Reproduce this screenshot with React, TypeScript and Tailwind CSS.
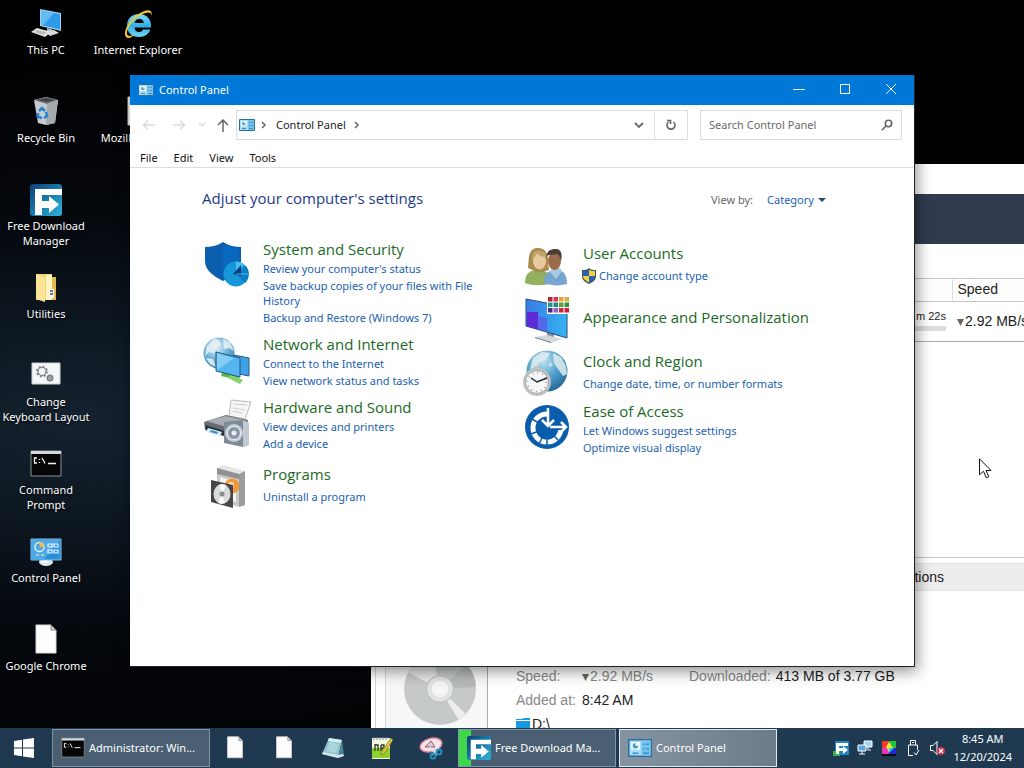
import type { ReactNode } from "react";

type IconProps = { size?: string };

/* ---------- desktop icons ---------- */

function PcIcon() {
  return (
    <svg viewBox="0 0 32 32" className="size-8">
      <path d="M10 1 31 5v18L10 18z" fill="#9fd0ef" />
      <path d="M11 2.500 30 6v15.500L11 17z" fill="#2f9be8" />
      <path d="M11 2.500 24 5 13 17.500l-2-.5z" fill="#63bdf5" />
      <path d="m17 20 5 1v3l-5-1z" fill="#aab4bb" />
      <path d="m14 23 10-1 5 3-9 3z" fill="#d3d8dc" />
      <path d="m1 24 6-4 14 4-6 5z" fill="#e4e4e4" />
      <path d="m4 24 4-2 9 2.500-4 2.500z" fill="#bdbdbd" />
    </svg>
  );
}

function IeIcon() {
  return (
    <svg viewBox="0 0 32 32" className="size-8">
      <defs>
        <linearGradient id="ie" x1="0" y1="0" x2="0" y2="1">
          <stop offset="0" stopColor="#7fdcf9" />
          <stop offset=".5" stopColor="#2fb0ea" />
          <stop offset="1" stopColor="#6fd3f5" />
        </linearGradient>
      </defs>
      <path
        d="M29 19.500H12.500c.3 3 2 4.500 4.500 4.500 2 0 3.200-.8 4-2.500h7.300C27 26 23 29 17 29 9.500 29 5 24.500 5 17.800 5 11 9.700 6 17 6c7.800 0 12 5 12 12zM12.600 15h9.200c-.3-2.600-2-4-4.500-4s-4.200 1.400-4.700 4z"
        fill="url(#ie)"
      />
      <path
        d="M6 30C-1 28 5 14 15 7 24 1 31 0 29.500 8 29.500 3 24 4 17 8 8 14 2.500 25 6 27.500c2 1 5 0 7-1.500-3 3-5 4.500-7 4z"
        fill="#f7c62e"
      />
    </svg>
  );
}

function BinIcon() {
  return (
    <svg viewBox="0 0 32 32" className="size-8">
      <path d="m4 4 12-3 12 3-3 23-9 2-8-2z" fill="#c9cccf" />
      <path d="m4 4 12-3 12 3-11 4z" fill="#6d7276" />
      <path d="m7 4 9-2 9 2-8 2z" fill="#3f4447" />
      <path d="m17 8 11-4-3 23-9 2z" fill="#a6aaae" />
      <path
        d="m9 15 3-3 3 3m1 1 1 4-3 2m-2 0-4-1 0-4"
        fill="none"
        stroke="#1f85d8"
        strokeWidth="2.500"
      />
    </svg>
  );
}

function FdmIcon({ size = "size-8" }: IconProps) {
  return (
    <svg viewBox="0 0 32 32" className={size}>
      <defs>
        <linearGradient id="fdm" x1="0" y1="0" x2="1" y2="1">
          <stop offset="0" stopColor="#0b3f74" />
          <stop offset="1" stopColor="#2cb5dc" />
        </linearGradient>
      </defs>
      <rect width="32" height="32" rx="3" fill="url(#fdm)" />
      <path d="M5 5h27v6H12v6h7v-5l10 8.500L19 29v-5h-7v7H5z" fill="#fff" />
    </svg>
  );
}

function FolderIcon() {
  return (
    <svg viewBox="0 0 32 32" className="size-8">
      <path d="M6 2h16v26H6z" fill="#f3d676" />
      <path d="M21 5h5v23h-5z" fill="#e2b94a" />
      <path d="M16 3h6v25h-6z" fill="#fff3c2" />
      <path d="m6 2 9 4v24l-9-3z" fill="#fbe39a" />
      <path d="M19 17h5v9h-5z" fill="#f6f6f6" />
      <path d="M20 18h3v2h-3zm0 3h3v2h-3z" fill="#777" />
    </svg>
  );
}

function GearsIcon() {
  return (
    <svg viewBox="0 0 32 32" className="size-8">
      <path d="M2 3h28v21H2z" fill="#f4f7f7" stroke="#ccd2d4" />
      <circle cx="12" cy="11.500" r="4" fill="none" stroke="#7b8285" strokeWidth="1.200" />
      <circle
        cx="12"
        cy="11.500"
        r="5"
        fill="none"
        stroke="#7b8285"
        strokeWidth="1.800"
        strokeDasharray="2 1.927"
      />
      <circle cx="20" cy="18" r="2.500" fill="none" stroke="#7b8285" strokeWidth="2" />
      <circle cx="20" cy="18" r="1" fill="#7b8285" />
    </svg>
  );
}

function TerminalIcon({ size = "size-8" }: IconProps) {
  return (
    <svg viewBox="0 0 32 32" className={size}>
      <path d="M1 3h30v25H1z" fill="#060606" stroke="#8d9296" />
      <path d="M1 3h30v3H1z" fill="#d5dade" />
      <path
        d="M7 10H4.500v5H7M9.500 11v1m0 2v1M12 10l3 5.500M18 15.500h8"
        fill="none"
        stroke="#f2f2f2"
        strokeWidth="1.300"
      />
    </svg>
  );
}

function PanelIcon({ size = "size-8", stand = false }: IconProps & { stand?: boolean }) {
  return (
    <svg viewBox="0 0 32 32" className={size}>
      {stand && (
        <g>
          <ellipse cx="16" cy="26" rx="7" ry="4" fill="#dfe6ea" />
          <ellipse cx="15" cy="25" rx="4" ry="2" fill="#fff" />
        </g>
      )}
      <path d="M1 3h30v21H1z" fill="#2b8fd6" stroke="#7cc4ee" />
      <path d="M2 4h28L14 23H2z" fill="#4fa9e2" />
      <circle cx="9.500" cy="11" r="4.500" fill="none" stroke="#d7effc" strokeWidth="1.500" />
      <path d="M9.500 11V6a5 5 0 0 1 4.500 5z" fill="#f3b63f" />
      <path
        d="M18 8h4v3h-4zm6 0h4v3h-4zm-6 6h4v3h-4zm6 0h4v3h-4zM6 19h3m2 0h3"
        fill="none"
        stroke="#e9f7ff"
        strokeWidth="1.200"
      />
    </svg>
  );
}

// Small version used in the title bar, address bar and taskbar
function PanelSmallIcon({ size = "size-4" }: IconProps) {
  return (
    <svg viewBox="0 0 16 16" className={size}>
      <path d="M.500 2.500h15v11H.500z" fill="#a9dcf6" stroke="#2c6f9e" />
      <path d="M9 3h6v10H9z" fill="#74c4ef" />
      <path d="M2 4h6v5H2z" fill="#e9f7fd" />
      <circle cx="5" cy="6.500" r="1.800" fill="#4599c9" />
      <path d="M5 6.500V4.500a2 2 0 0 1 2 2z" fill="#fff" />
      <path d="M10 5.500h1m1 0h2m-4 3h1m1 0h2m-11 3h4m3 0h4" stroke="#3c8fc0" />
    </svg>
  );
}

function PageIcon({ size = "size-8" }: IconProps) {
  return (
    <svg viewBox="0 0 32 32" className={size}>
      <path d="M6 1h15l5 5v23H6z" fill="#fdfdfd" stroke="#d7d7d7" />
      <path d="M21 1v5h5z" fill="#dcdcdc" stroke="#666" strokeWidth=".8" />
    </svg>
  );
}

/* ---------- category icons ---------- */

function SecurityIcon() {
  return (
    <svg viewBox="0 0 48 48" className="size-12">
      <path d="M20 1c6 4 12 5 18 5v14c0 9-8 15-18 20C10 35 2 29 2 20V6c6 0 12-1 18-5z" fill="#0a5fae" />
      <path d="M20 3c5 3 11 4 16 4v13c0 8-7 13-16 18z" fill="#0868bd" />
      <circle cx="33" cy="33" r="12.500" fill="#1597d8" />
      <path d="M33 33 43 25a12.500 12.500 0 0 1-1 17z" fill="#0d7fc6" />
      <path d="M33 33V20.500a12.500 12.500 0 0 1 8 3z" fill="#4ac0ee" />
      <path d="m30 33 8-9v11z" fill="#073f86" />
      <path d="M33 33h12.500" stroke="#45b8e9" />
    </svg>
  );
}

function NetworkIcon() {
  return (
    <svg viewBox="0 0 48 48" className="size-12">
      <defs>
        <radialGradient id="globe" cx=".4" cy=".3" r=".8">
          <stop offset="0" stopColor="#e9f5fb" />
          <stop offset=".5" stopColor="#6fb1d6" />
          <stop offset="1" stopColor="#2f7fb0" />
        </radialGradient>
      </defs>
      <circle cx="16" cy="17" r="15.500" fill="url(#globe)" />
      <path d="m4 10 7-7 5 1 2 5-5 3-2 5-5-1-4 4zM20 3l7 3 4 9-5-3-5 1zM3 22l7 1 3 8-6-3z" fill="#e8f1f3" opacity=".85" />
      <path d="m20 35 16 4v5l-18-4z" fill="#54b848" />
      <path d="m28 38 12 6-3 4-12-6z" fill="#83d36d" />
      <path d="m31 19 15 3v18l-15-3z" fill="#3ba2e8" stroke="#2c5f86" />
      <path d="m13 16 24 6v19l-24-6z" fill="#55b5f0" stroke="#20567c" />
      <path d="m14 17 17 5-17 12z" fill="#83cdf7" />
    </svg>
  );
}

function HardwareIcon() {
  return (
    <svg viewBox="0 0 48 48" className="size-12">
      <path d="M28 1 48 3l-6 17-16-3z" fill="#f5f5f5" stroke="#bcbcbc" />
      <path d="m31 5 13 1m-14 3 12 2m-13 1 11 2" stroke="#cfcfcf" />
      <path d="m1 23 22-7 22 5-3 12-19 5L2 31z" fill="#686d73" />
      <path d="m3 22 20-5 19 4-18 7z" fill="#a9aeb3" />
      <path d="m2 26 20 6v5L3 31z" fill="#29333b" />
      <path d="m5 29 14 4-2 4-14-4z" fill="#d8edf7" />
      <path d="m8 31 7 2-1 2-7-2z" fill="#3791c4" />
      <path d="m21 23 19-2 6 3v22l-6 2-19-4z" fill="#7e8b99" />
      <path d="m40 21 6 3v22l-6 2z" fill="#c2cad1" />
      <circle cx="31" cy="34" r="9" fill="#c8ced4" />
      <circle cx="31" cy="34" r="6.500" fill="#8996a5" stroke="#eef1f4" />
      <circle cx="31" cy="34" r="2.500" fill="#e9edf0" />
    </svg>
  );
}

function ProgramsIcon() {
  return (
    <svg viewBox="0 0 48 48" className="size-12">
      <path d="m14 6 6-3 22 6-6 3z" fill="#e6e6e6" />
      <path d="m14 6 22 6v33l-22-6z" fill="#c9c9c9" />
      <path d="m36 12 6-3v34l-6 2z" fill="#9c9c9c" />
      <path d="m14 6 22 6v5l-22-5z" fill="#919191" />
      <path d="m17 15 16 4v21l-16-3z" fill="#f2f2f2" />
      <circle cx="29" cy="24" r="7.500" fill="#f2973a" />
      <circle cx="28" cy="23" r="3" fill="#fde0b0" />
      <path d="m8 18 22 5v23L8 40z" fill="#474747" />
      <ellipse cx="19" cy="32" rx="8.500" ry="10" fill="#d9dcdd" />
      <path d="m19 32-3-9a9 9 0 0 1 7 0zm0 0 3 9a9 9 0 0 1-7 0z" fill="#f8fafa" />
      <circle cx="19" cy="32" r="2.500" fill="#8a8f91" />
    </svg>
  );
}

function UsersIcon() {
  return (
    <svg viewBox="0 0 48 48" className="size-12">
      <path d="M2 42c0-9 4-13 13-13s14 5 14 13c-8 3-19 3-27 0z" fill="#93b05f" />
      <path d="M5 27C6 17 5 8 14 7c9-1 11 7 11 13 0 4 1 6 1 9l-10 3z" fill="#a98d4f" />
      <ellipse cx="16.500" cy="20" rx="6.500" ry="8.500" fill="#e8c9a0" />
      <path d="M9 18c0-7 4-9 9-8 4 1 5 4 5 6-5 0-8-2-9-4-1 3-3 5-5 6z" fill="#c0a566" />
      <path d="M21 42c0-10 5-13 12-13s11 4 11 14c-7 2-15 2-23-1z" fill="#78a5cf" />
      <path d="m27 31 6 7 6-8-2-3h-8z" fill="#a8c8e4" />
      <ellipse cx="31.500" cy="20" rx="6.500" ry="9" fill="#9c6b49" />
      <path d="M24 19c-2-8 3-11 8-11s8 3 6 12c-1-4-2-6-4-7-4 1-8 0-10 2z" fill="#4a3c34" />
    </svg>
  );
}

const swatches = [
  ["#b5262d", "#d4315b", "#e7a13c", "#d9b23a"],
  ["#21998a", "#1a8c74", "#5aa33c", "#2f9148"],
  ["#4c2382", "#8b61cf", "#c5283b", "#d0202e"],
];

function AppearanceIcon() {
  return (
    <svg viewBox="0 0 48 48" className="size-12">
      <defs>
        <linearGradient id="screen" x1="0" y1="0" x2="1" y2="0">
          <stop offset="0" stopColor="#3a7be4" />
          <stop offset="1" stopColor="#35b3f2" />
        </linearGradient>
      </defs>
      <path d="m24 36 7 2v5l-7-2z" fill="#8b9096" />
      <path d="m12 42 12-2 15 4-11 4z" fill="#d5d8db" />
      <path d="m12 42 16 5v1l-16-5z" fill="#777c80" />
      <path d="m3 4 41 8v31L3 31z" fill="url(#screen)" stroke="#274b7c" />
      <path d="M4 17h11v17L4 31z" fill="#5f2bd8" />
      <path d="m15 21 9 2v13l-9-2z" fill="#5368ea" />
      <path d="M24 1h23v18H24z" fill="#fff" />
      {swatches.map((row, y) =>
        row.map((fill, x) => (
          <rect key={`${x}-${y}`} x={25 + x * 5.5} y={2 + y * 5.5} width="4.500" height="4.500" fill={fill} />
        ))
      )}
    </svg>
  );
}

function ClockIcon() {
  return (
    <svg viewBox="0 0 48 48" className="size-12">
      <defs>
        <radialGradient id="world" cx=".4" cy=".25" r=".85">
          <stop offset="0" stopColor="#c3e3f3" />
          <stop offset=".5" stopColor="#4d9fcb" />
          <stop offset="1" stopColor="#1c5c8d" />
        </radialGradient>
      </defs>
      <circle cx="24" cy="22" r="20.500" fill="url(#world)" />
      <path d="m10 9 9-6 8 1-3 6-7 3-4 6-6 1zM30 4l8 4 5 9 1 8-4 2-5-7-4-6zM27 13l3 3-4 2z" fill="#e0edf0" opacity=".85" />
      <rect x="11" y="17" width="6" height="5" rx="1" fill="#c1c4c7" />
      <circle cx="14" cy="33" r="14" fill="#bfc3c6" />
      <circle cx="14" cy="33" r="11.500" fill="#f5f6f7" stroke="#9fa4a8" />
      <circle cx="14" cy="33" r="9.500" fill="none" stroke="#929292" strokeWidth="1.500" strokeDasharray="1 3.970" />
      <path d="m8 29 6 4 10-4" fill="none" stroke="#222" strokeWidth="1.500" />
    </svg>
  );
}

function AccessIcon() {
  return (
    <svg viewBox="0 0 48 48" className="size-12">
      <circle cx="24" cy="24" r="22" fill="#0a5cad" />
      <circle
        cx="24"
        cy="25"
        r="14"
        fill="none"
        stroke="#fff"
        strokeWidth="5"
        strokeDasharray="65.970 21.990"
      />
      <path d="m24 25-15-9m15 9L8 31m16-6-8 16m8-16v17m0-17 11 12" stroke="#0a5cad" strokeWidth="1.500" />
      <circle cx="24" cy="25" r="10" fill="#0a5cad" />
      <path d="M30 22h14v5H30z" fill="#0a5cad" />
      <path d="M25 5v18m-6-6 6 6 6-6M27 24h16m-5-5 5 5-5 5" fill="none" stroke="#fff" strokeWidth="2.500" />
    </svg>
  );
}

function UacShield() {
  return (
    <svg viewBox="0 0 16 16" className="-ml-0.5 mr-0.5 size-4 shrink-0">
      <path d="M8 0c2 2 4 2 7 2v6c0 4-3 6-7 8-4-2-7-4-7-8V2c3 0 5 0 7-2z" fill="#44525c" />
      <path d="M8 2v6H2V3c2 0 4 0 6-1z" fill="#2463b5" />
      <path d="M8 2c2 1 4 1 6 1v5H8z" fill="#f2d33c" />
      <path d="M2 8h6v6.500C5 13 2 11 2 8z" fill="#f2d33c" />
      <path d="M8 8h6c0 3-3 5-6 6.500z" fill="#2463b5" />
    </svg>
  );
}

/* ---------- desktop ---------- */

type Shortcut = { label: string; icon: ReactNode };

const shortcutColumns: Shortcut[][] = [
  [
    { label: "This PC", icon: <PcIcon /> },
    { label: "Recycle Bin", icon: <BinIcon /> },
    { label: "Free Download\nManager", icon: <FdmIcon /> },
    { label: "Utilities", icon: <FolderIcon /> },
    { label: "Change\nKeyboard Layout", icon: <GearsIcon /> },
    { label: "Command\nPrompt", icon: <TerminalIcon /> },
    { label: "Control Panel", icon: <PanelIcon stand /> },
    { label: "Google Chrome", icon: <PageIcon /> },
  ],
  [
    { label: "Internet Explorer", icon: <IeIcon /> },
    { label: "Mozilla Firefox", icon: <PageIcon /> },
  ],
];

function Desktop() {
  return (
    <div className="flex">
      {shortcutColumns.map((column, i) => (
        <div key={i} className="flex w-[92px] flex-col">
          {column.map((item) => (
            <button
              key={item.label}
              className="flex h-[88px] flex-col items-center gap-0.5 pt-2 text-[11px] leading-[15px] text-white"
            >
              {item.icon}
              <span className="whitespace-pre [text-shadow:0_1px_2px_#000]">{item.label}</span>
            </button>
          ))}
        </div>
      ))}
    </div>
  );
}

/* ---------- download manager window ---------- */

function DownArrow() {
  return (
    <svg viewBox="0 0 8 7" className="inline h-[7px] w-2 align-baseline">
      <path d="M0 0h7L3.500 7z" fill="#666" />
    </svg>
  );
}

function DownloadWindow() {
  return (
    <section className="absolute top-[164px] right-0 bottom-0 left-[371px] flex flex-col overflow-hidden bg-white font-['Liberation_Sans',sans-serif] text-sm text-[#222]">
      <div className="h-[30px] shrink-0" />
      <div className="h-[50px] shrink-0 bg-[#303b50]" />
      <div className="h-[34px] shrink-0" />

      <table className="w-full table-fixed border-collapse">
        <thead>
          <tr className="h-[23px] border-y border-[#c4c4c4] bg-[#fdfdfd] leading-5">
            <th className="w-[581px] border-r border-[#ddd]" />
            <th className="pb-0.5 pl-[5px] text-left font-normal">Speed</th>
          </tr>
        </thead>
        <tbody>
          <tr className="h-10 border-b border-[#aaa]">
            <td className="pr-1.5 pb-1 text-right text-[11px] leading-4">
              m 22s
              <div className="mt-0.5 h-[5px] bg-[#dcdcdc]" />
            </td>
            <td className="pb-0.5 pl-[5px] whitespace-nowrap">
              <DownArrow />
              2.92 MB/s
            </td>
          </tr>
        </tbody>
      </table>

      <div className="flex-1 border-b border-[#c8c8c8]" />
      <div className="mt-[5px] flex h-7 shrink-0 items-center border-y border-[#e2e2e2] bg-[#ededed]">
        <button className="w-[573px] pb-px text-right">Connections</button>
      </div>

      <div className="flex h-[137px] shrink-0 pl-1">
        <div className="w-[11px] shrink-0 border-x border-[#d5d5d5]" />
        <div className="flex w-[102px] shrink-0 items-end justify-center border-r border-[#aaa] bg-[#f6f8f8] pb-0.5 pl-1.5">
          <svg viewBox="0 0 72 72" className="size-[74px]">
            <circle cx="36" cy="36" r="35" fill="#c5cac8" />
            <path d="M36 36 5 20A35 35 0 0 1 29 2z" fill="#e3e7e5" />
            <path d="M36 36 71 34a35 35 0 0 0-9-22z" fill="#b5bab8" />
            <path d="m36 36 18 30a35 35 0 0 0 7-6z" fill="#eceeed" />
            <circle cx="36" cy="36" r="13" fill="#dfe3e1" stroke="#b9bebc" />
            <circle cx="36" cy="36" r="8" fill="#f3f5f4" />
          </svg>
        </div>
        <div className="flex flex-col justify-end gap-2 pl-7 leading-4 text-[#888]">
          <div className="flex">
            <span className="w-[66px]">Speed:</span>
            <span className="w-[107px]">
              <DownArrow />
              2.92 MB/s
            </span>
            <span className="mr-[5px]">Downloaded:</span>
            <span className="text-[#222]">413 MB of 3.77 GB</span>
          </div>
          <div className="flex">
            <span className="w-[66px]">Added at:</span>
            <span className="text-[#222]">8:42 AM</span>
          </div>
          <div className="-mb-1 flex items-center gap-0.5 text-[#222]">
            <svg viewBox="0 0 14 14" className="size-3.5">
              <path d="M0 2h6l2-1h6v2H0zM0 4h14v10H0z" fill="#1699e0" />
            </svg>
            D:\
          </div>
        </div>
      </div>
    </section>
  );
}

/* ---------- control panel window ---------- */

type Category = {
  title: string;
  icon: ReactNode;
  links: string[];
  shield?: boolean;
};

const leftCategories: Category[] = [
  {
    title: "System and Security",
    icon: <SecurityIcon />,
    links: [
      "Review your computer's status",
      "Save backup copies of your files with File History",
      "Backup and Restore (Windows 7)",
    ],
  },
  {
    title: "Network and Internet",
    icon: <NetworkIcon />,
    links: ["Connect to the Internet", "View network status and tasks"],
  },
  {
    title: "Hardware and Sound",
    icon: <HardwareIcon />,
    links: ["View devices and printers", "Add a device"],
  },
  {
    title: "Programs",
    icon: <ProgramsIcon />,
    links: ["Uninstall a program"],
  },
];

const rightCategories: Category[] = [
  {
    title: "User Accounts",
    icon: <UsersIcon />,
    links: ["Change account type"],
    shield: true,
  },
  {
    title: "Appearance and Personalization",
    icon: <AppearanceIcon />,
    links: [],
  },
  {
    title: "Clock and Region",
    icon: <ClockIcon />,
    links: ["Change date, time, or number formats"],
  },
  {
    title: "Ease of Access",
    icon: <AccessIcon />,
    links: ["Let Windows suggest settings", "Optimize visual display"],
  },
];

function CategoryItem({ title, icon, links, shield }: Category) {
  return (
    <div className="flex gap-3">
      <div className="size-12 shrink-0 pt-0.5">{icon}</div>
      <div className={`flex min-h-12 flex-col justify-center ${links.length > 1 ? "gap-0.5" : "gap-[5px]"}`}>
        <a href="#" className="font-['Open_Sans',sans-serif] text-[15px] leading-5 text-[#1b6a1f]">
          {title}
        </a>
        {links.map((link) => (
          <a key={link} href="#" className="flex items-center text-[11px] leading-[15px] text-[#1a5fb0]">
            {shield && <UacShield />}
            {link}
          </a>
        ))}
      </div>
    </div>
  );
}

function TitleBar() {
  return (
    <header className="flex h-[30px] shrink-0 items-center bg-[#0078d7] text-white">
      <span className="flex flex-1 items-center gap-[5px] pl-2 text-[11px]">
        <PanelSmallIcon />
        Control Panel
      </span>
      <button aria-label="Minimize" className="flex h-full w-[46px] items-center justify-center">
        <svg viewBox="0 0 12 12" className="size-3" stroke="currentColor">
          <path d="M0 5.500h12" />
        </svg>
      </button>
      <button aria-label="Maximize" className="flex h-full w-[46px] items-center justify-center">
        <svg viewBox="0 0 12 12" className="size-3" stroke="currentColor" fill="none">
          <path d="M1.500.500h9v9h-9z" />
        </svg>
      </button>
      <button aria-label="Close" className="flex h-full w-[46px] items-center justify-center">
        <svg viewBox="0 0 12 12" className="size-3" stroke="currentColor">
          <path d="m1 0 10 10M11 0 1 10" />
        </svg>
      </button>
    </header>
  );
}

function NavBar() {
  return (
    <div className="flex h-10 shrink-0 items-center pr-3 text-[11px] text-[#222]">
      <div className="flex w-[106px] shrink-0 items-center pl-3">
        <button aria-label="Back" className="mr-4">
          <svg viewBox="0 0 14 14" className="size-3.5" fill="none" stroke="#dadada" strokeWidth="1.500">
            <path d="M13 7H2m4-4.500L1.500 7 6 11.500" />
          </svg>
        </button>
        <button aria-label="Forward" className="mr-3">
          <svg viewBox="0 0 14 14" className="size-3.5" fill="none" stroke="#dadada" strokeWidth="1.500">
            <path d="M1 7h11M8 2.500 12.500 7 8 11.500" />
          </svg>
        </button>
        <button aria-label="Recent" className="mr-2.5">
          <svg viewBox="0 0 8 8" className="size-2" fill="none" stroke="#dadada" strokeWidth="1.500">
            <path d="m1 2 3 3 3-3" />
          </svg>
        </button>
        <button aria-label="Up">
          <svg viewBox="0 0 14 14" className="size-3.5" fill="none" stroke="#666" strokeWidth="1.500">
            <path d="M7 14V2M2 7l5-5 5 5" />
          </svg>
        </button>
      </div>

      <div className="mr-3 flex h-[30px] flex-1 items-center border border-[#dcdcdc] pl-0.5">
        <PanelSmallIcon />
        <svg viewBox="0 0 6 8" className="mx-1.5 h-2 w-1.5" fill="none" stroke="#666" strokeWidth="1.500">
          <path d="m1 1 3 3-3 3" />
        </svg>
        <button className="mr-2 ml-[3px]">Control Panel</button>
        <svg viewBox="0 0 6 8" className="h-2 w-1.5" fill="none" stroke="#666" strokeWidth="1.500">
          <path d="m1 1 3 3-3 3" />
        </svg>
        <button aria-label="Previous locations" className="ml-auto flex h-full w-8 items-center justify-center border-r border-[#dcdcdc]">
          <svg viewBox="0 0 10 10" className="size-2.5" fill="none" stroke="#666" strokeWidth="1.800">
            <path d="m1 3 4 4 4-4" />
          </svg>
        </button>
        <button aria-label="Refresh" className="flex h-full w-8 items-center justify-center">
          <svg viewBox="0 0 12 12" className="size-3" fill="none" stroke="#666" strokeWidth="1.600">
            <path d="M8.500 3a4 4 0 1 1-5 0M2 1.500h3.500V5" />
          </svg>
        </button>
      </div>

      <label className="flex h-[30px] w-[202px] shrink-0 items-center border border-[#dcdcdc] px-2">
        <input
          type="text"
          aria-label="Search Control Panel"
          placeholder="Search Control Panel"
          className="min-w-0 flex-1 outline-none placeholder:text-[#6a6a6a]"
        />
        <svg viewBox="0 0 12 12" className="size-3" fill="none" stroke="#666" strokeWidth="1.600">
          <circle cx="7.500" cy="4.500" r="3.200" />
          <path d="M5 7 .8 11.200" />
        </svg>
      </label>
    </div>
  );
}

function ControlPanelWindow() {
  return (
    <section className="absolute top-[75px] right-[109px] bottom-[61px] left-[130px] flex flex-col border-r border-b border-[#222] bg-white shadow-[2px_4px_14px_rgba(0,0,0,0.45)]">
      <TitleBar />
      <NavBar />
      <nav className="flex h-[23px] shrink-0 items-center gap-4 border-b border-[#dedede] pt-1 pl-2.5 text-[11px] leading-4 text-[#111]">
        <button>File</button>
        <button>Edit</button>
        <button>View</button>
        <button>Tools</button>
      </nav>

      <main className="flex-1 pt-5 pl-[72px]">
        <div className="flex items-center">
          <h1 className="w-[509px] pb-1 font-['Open_Sans',sans-serif] text-[15px] leading-5 text-[#1e3a86]">
            Adjust your computer's settings
          </h1>
          <label htmlFor="view-by" className="mr-3.5 text-[11px] text-[#666]">
            View by:
          </label>
          <div className="flex items-center gap-1">
            <select id="view-by" className="appearance-none text-[11px] text-[#1a5fb0] outline-none">
              <option>Category</option>
            </select>
            <svg viewBox="0 0 8 4" className="h-1 w-2">
              <path d="M0 0h8L4 4z" fill="#234f6e" />
            </svg>
          </div>
        </div>

        <div className="mt-[27px] flex gap-[38px] pl-px">
          <div className="flex w-[282px] flex-col gap-[9px]">
            {leftCategories.map((category) => (
              <CategoryItem key={category.title} {...category} />
            ))}
          </div>
          <div className="flex flex-1 flex-col gap-1.5">
            {rightCategories.map((category) => (
              <CategoryItem key={category.title} {...category} />
            ))}
          </div>
        </div>
      </main>
    </section>
  );
}

function Cursor() {
  return (
    <svg viewBox="0 0 13 21" className="pointer-events-none absolute top-[458px] left-[979px] h-[21px] w-[13px]">
      <path d="M.500.800v16l4-3.500 2.800 6.500 2.500-1.100L7 12.500h5z" fill="#fff" stroke="#111" />
    </svg>
  );
}

/* ---------- taskbar ---------- */

function NotepadIcon() {
  return (
    <svg viewBox="0 0 24 24" className="size-6">
      <path d="m8 2 13 2-4 18L1 18z" fill="#8fc4cf" />
      <path d="m8 2 13 2-1 3L7 5z" fill="#d9eef0" />
      <path d="M21 4 23 20l-6 2z" fill="#4e8795" />
      <path d="M1 18l16 4 6-2-1-2-5 1-15-3z" fill="#d7e4e6" />
      <path d="m9 6 9 2-3 9-10-2z" fill="#a9d6dd" />
    </svg>
  );
}

function NotepadPlusIcon() {
  return (
    <svg viewBox="0 0 24 24" className="size-6">
      <path d="M2 2h18v21H2z" fill="#f2f8e4" />
      <path d="M2 12h18v10H2z" fill="#8ed12f" />
      <path d="M4 1v3m3-3v3m3-3v3m3-3v3m3-3v3" stroke="#888" />
      <path d="M5 8v7m0-6h3v6m3-6v6m0-3h3V9h-3" fill="none" stroke="#303a1e" strokeWidth="1.300" />
      <path d="m21 2 2 2-9 14-3 1 1-4z" fill="#e0c33a" stroke="#5d6b22" strokeWidth=".6" />
    </svg>
  );
}

function SnippingIcon() {
  return (
    <svg viewBox="0 0 24 24" className="size-6">
      <ellipse cx="12" cy="9" rx="11" ry="6.500" fill="#f4e6ea" stroke="#e58aa0" strokeWidth="1.500" transform="rotate(-15 12 9)" />
      <path d="m6 11 6-6 4 6z" fill="#c9d3da" stroke="#b4485e" />
      <path d="m11 11 7 8m2-8-7 8" stroke="#dfe6ea" strokeWidth="1.600" />
      <circle cx="20" cy="16" r="2.500" fill="none" stroke="#2493c6" strokeWidth="1.800" />
      <circle cx="14" cy="20" r="2.500" fill="none" stroke="#2493c6" strokeWidth="1.800" />
    </svg>
  );
}

const pinned = [
  { label: "Google Chrome", icon: <PageIcon size="size-6" /> },
  { label: "Mozilla Firefox", icon: <PageIcon size="size-6" /> },
  { label: "Notepad", icon: <NotepadIcon /> },
  { label: "Notepad++", icon: <NotepadPlusIcon /> },
  { label: "Snipping Tool", icon: <SnippingIcon /> },
];

function Tray() {
  return (
    <div className="flex items-center gap-2">
      <svg viewBox="0 0 16 16" className="size-4">
        <path d="M2 1h14v14H2z" fill="#1c86c7" />
        <path d="M0 11h7v5H0z" fill="#37b34a" />
        <path d="M3 3h12v3H6v2h4V6l5 4-5 4v-3H6v3H3z" fill="#fff" />
      </svg>
      <svg viewBox="0 0 16 16" className="size-4">
        <path d="M7 1h8v6H7z" fill="#a8d4f1" stroke="#fff" />
        <path d="M1 5h8v6H1z" fill="#5ba7dc" stroke="#fff" />
        <path d="M5 11v3m-3 0h6m3-7v3h3" stroke="#fff" fill="none" />
      </svg>
      <svg viewBox="0 0 16 16" className="size-4">
        <path d="M1 1h7v7H1z" fill="#f23a2e" />
        <path d="M8 1h7v7H8z" fill="#24c43c" />
        <path d="M1 8h7v6H1z" fill="#e935b8" />
        <path d="M8 8h7v6H8z" fill="#1d2ad8" />
        <path d="m8 2 4 6-4 4-3-5z" fill="#f3e83a" />
        <path d="M8 8h5l-5 5z" fill="#28c8e8" />
        <path d="M1 14h14v2H1z" fill="#0a0a0a" />
      </svg>
      <svg viewBox="0 0 16 16" className="size-4" fill="none" stroke="#fff">
        <path d="M5.500 5V.500h5V5m-7 10.500V5h9v5M3.500 15.500H8M7 2.500h2M9 12.500l2 2.500 3-5" />
      </svg>
      <svg viewBox="0 0 16 16" className="size-4" fill="none">
        <path d="M1.500 5.500v5H4l4 4v-13l-4 4z" stroke="#fff" />
        <circle cx="12" cy="11" r="4" fill="#d9304a" />
        <path d="m10 9 4 4m0-4-4 4" stroke="#fff" strokeWidth="1.300" />
      </svg>
    </div>
  );
}

function Taskbar() {
  return (
    <footer className="z-10 flex h-10 shrink-0 items-center bg-[#1f3a50] text-[11px] text-white">
      <button aria-label="Start" className="mr-1 flex h-full w-12 items-center justify-center">
        <svg viewBox="0 0 20 20" className="size-5" fill="#fff">
          <path d="m0 3 8-1.200v7.700H0zM9 1.600 20 0v9.500H9zM0 10.500h8v7.700L0 17zM9 10.500h11V20L9 18.400z" />
        </svg>
      </button>

      <button className="flex h-[38px] w-[158px] items-center gap-1 border border-[#8094a3] bg-[#4a6072] pl-2">
        <TerminalIcon size="size-6" />
        Administrator: Win...
      </button>

      {pinned.map((app) => (
        <button key={app.label} aria-label={app.label} className="flex h-full w-[49px] items-center justify-center">
          {app.icon}
        </button>
      ))}

      <button className="mr-[3px] ml-[3px] flex h-[38px] w-[158px] items-center gap-1 border border-[#8094a3] bg-linear-to-r from-[#3fd84a] from-[12px] to-[#4a6072] to-[12px] pl-2">
        <FdmIcon size="size-6" />
        Free Download Ma...
      </button>
      <button className="flex h-[38px] w-[158px] items-center gap-1 border border-[#e3e8ec] bg-linear-to-r from-[#8694a1] to-[#6d7c8b] pl-2">
        <PanelSmallIcon size="size-6" />
        Control Panel
      </button>

      <div className="ml-auto flex items-center pr-3">
        <Tray />
        <time className="ml-2 text-center leading-[18px]">
          8:45 AM
          <br />
          12/20/2024
        </time>
      </div>
    </footer>
  );
}

export default function App() {
  return (
    <div className="flex h-screen flex-col overflow-hidden bg-black font-['Noto_Sans','Open_Sans',sans-serif]">
      <div className="relative flex-1 bg-[radial-gradient(ellipse_at_8%_58%,#15222f_0%,#0d1721_16%,#04070c_36%,#000_65%)]">
        <Desktop />
        <DownloadWindow />
        <ControlPanelWindow />
        <Cursor />
      </div>
      <Taskbar />
    </div>
  );
}
